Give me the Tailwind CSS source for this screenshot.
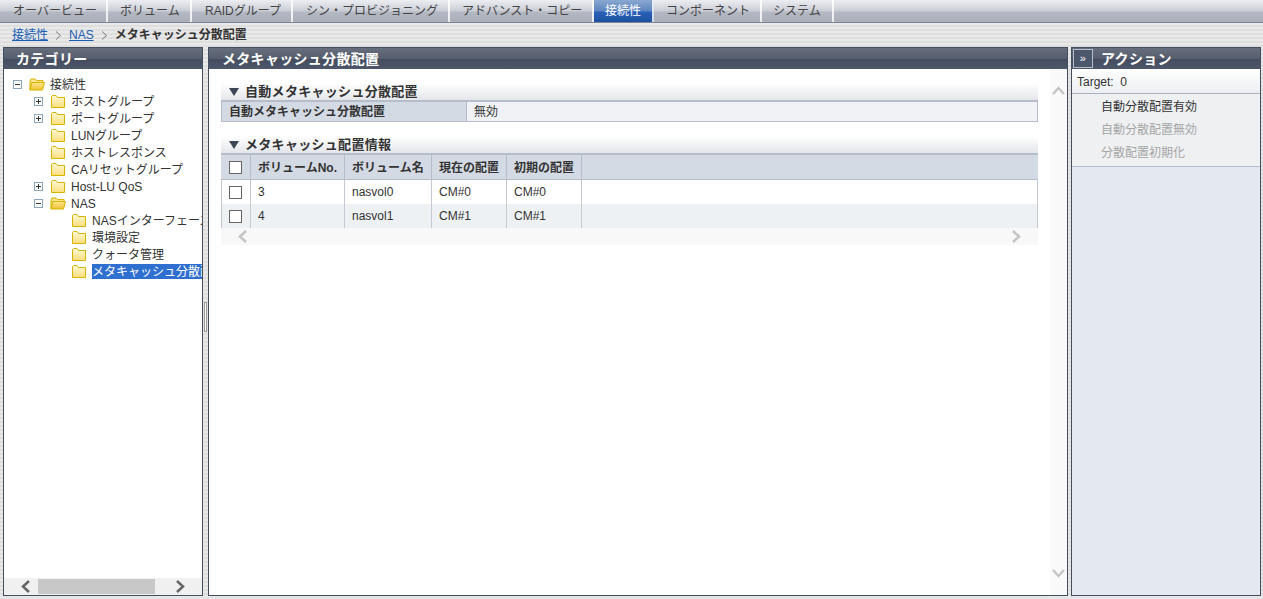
<!DOCTYPE html>
<html lang="ja">
<head>
    <meta charset="UTF-8">
    <title>メタキャッシュ分散配置</title>
    <script src="https://cdn.jsdelivr.net/npm/@tailwindcss/browser@4"></script>
</head>
<body class="h-screen w-[1263px] overflow-hidden flex flex-col bg-[#e6e6e6] text-[12px] leading-none text-[#333] font-['Liberation_Sans','Noto_Sans_CJK_JP',sans-serif]">

    <!-- shared folder fills -->
    <svg class="absolute w-0 h-0">
        <defs>
            <linearGradient id="folderClosed" x1="0" y1="0" x2="0" y2="1"><stop offset="0" stop-color="#fff8d6"/><stop offset="1" stop-color="#fbdf7c"/></linearGradient>
            <linearGradient id="folderOpen" x1="0" y1="0" x2="0" y2="1"><stop offset="0" stop-color="#fbe58c"/><stop offset="1" stop-color="#eec234"/></linearGradient>
        </defs>
    </svg>

    <!-- Tabs -->
    <nav class="h-[23px] shrink-0 flex border-b border-[#7b8494] bg-[linear-gradient(180deg,#eceef2_0%,#c9ccd4_50%,#b4b8c2_55%,#a9aeb9_100%)]">
        <a class="w-[108px] pl-[13px] pt-[5px] border-r-2 border-white/80 text-[#444]">オーバービュー</a>
        <a class="w-[84px] pl-[12px] pt-[5px] border-r-2 border-white/80 text-[#444]">ボリューム</a>
        <a class="w-[101px] pl-[13px] pt-[5px] border-r-2 border-white/80 text-[#444]">RAIDグループ</a>
        <a class="w-[157px] pl-[13px] pt-[5px] border-r-2 border-white/80 text-[#444]">シン・プロビジョニング</a>
        <a class="w-[144px] pl-[12px] pt-[5px] border-r-2 border-white/80 text-[#444]">アドバンスト・コピー</a>
        <a class="w-[60px] pl-[11px] pt-[5px] border-r-2 border-white/80 text-white bg-[linear-gradient(180deg,#8aa8d0_0%,#5d86c0_50%,#2a62b8_54%,#1d50a0_100%)]">接続性</a>
        <a class="w-[108px] pl-[12px] pt-[5px] border-r-2 border-white/80 text-[#444]">コンポーネント</a>
        <a class="w-[72px] pl-[11px] pt-[5px] border-r-2 border-white/80 text-[#444]">システム</a>
    </nav>

    <!-- Breadcrumb -->
    <div class="h-[24px] shrink-0 flex items-center pl-[12px] bg-[repeating-linear-gradient(180deg,#e9e9e9_0px,#e9e9e9_2px,#dedede_2px,#dedede_4px)]">
        <a class="text-[#1a5fb4] underline">接続性</a>
        <svg class="mx-[7px] w-[7px] h-[9px]" viewBox="0 0 7 9" fill="none" stroke="#777" stroke-width="1"><path d="M1 0.5 L5.5 4.5 L1 8.5"/></svg>
        <a class="text-[#1a5fb4] underline">NAS</a>
        <svg class="mx-[7px] w-[7px] h-[9px]" viewBox="0 0 7 9" fill="none" stroke="#777" stroke-width="1"><path d="M1 0.5 L5.5 4.5 L1 8.5"/></svg>
        <span class="font-bold">メタキャッシュ分散配置</span>
    </div>

    <main class="h-[549px] flex pl-[3px] bg-[repeating-linear-gradient(180deg,#e9e9e9_0px,#e9e9e9_2px,#dedede_2px,#dedede_4px)]">
        <!-- Category panel -->
        <section class="w-[200px] flex flex-col border border-[#454e5f] bg-white">
            <h2 class="h-[21px] shrink-0 pl-[12px] pt-[4px] text-[14px] tracking-[0.3px] font-bold text-white bg-[linear-gradient(180deg,#666d7d_0%,#565e6e_50%,#454e60_54%,#4d566a_100%)]">カテゴリー</h2>
            <div class="flex-1 pt-[7px] overflow-hidden">
                <!-- Tree -->
                <div class="h-[17px] flex items-center pl-[9px] whitespace-nowrap">
                    <svg class="w-[9px] h-[9px] mr-[7px]" viewBox="0 0 9 9"><rect x="0.5" y="0.5" width="8" height="8" fill="#fff" stroke="#8aa6c0"/><path d="M2 4.5h5" stroke="#333"/></svg>
                    <svg class="w-[16px] h-[13px] mr-[5px]" viewBox="0 0 16 13"><path d="M1 3 L2 1 H6 L7.5 2.5 H14 V4.5 H3 L1 11 Z" fill="#fbe58c" stroke="#d6b400"/><path d="M3 4.5 H15.5 L13.5 12 H0.8 Z" fill="url(#folderOpen)" stroke="#d6b400"/></svg>
                    <span>接続性</span>
                </div>
                <div class="h-[17px] flex items-center pl-[30px] whitespace-nowrap">
                    <svg class="w-[9px] h-[9px] mr-[8px]" viewBox="0 0 9 9"><rect x="0.5" y="0.5" width="8" height="8" fill="#fff" stroke="#8aa6c0"/><path d="M2 4.5h5M4.5 2v5" stroke="#333"/></svg>
                    <svg class="w-[14px] h-[13px] mr-[6px]" viewBox="0 0 14 13"><path d="M0.5 12.5 V1.5 L1.5 0.5 H5 L6.5 2.5 H13.5 V12.5 Z" fill="url(#folderClosed)" stroke="#d6b400"/></svg>
                    <span>ホストグループ</span>
                </div>
                <div class="h-[17px] flex items-center pl-[30px] whitespace-nowrap">
                    <svg class="w-[9px] h-[9px] mr-[8px]" viewBox="0 0 9 9"><rect x="0.5" y="0.5" width="8" height="8" fill="#fff" stroke="#8aa6c0"/><path d="M2 4.5h5M4.5 2v5" stroke="#333"/></svg>
                    <svg class="w-[14px] h-[13px] mr-[6px]" viewBox="0 0 14 13"><path d="M0.5 12.5 V1.5 L1.5 0.5 H5 L6.5 2.5 H13.5 V12.5 Z" fill="url(#folderClosed)" stroke="#d6b400"/></svg>
                    <span>ポートグループ</span>
                </div>
                <div class="h-[17px] flex items-center pl-[47px] whitespace-nowrap">
                    <svg class="w-[14px] h-[13px] mr-[6px]" viewBox="0 0 14 13"><path d="M0.5 12.5 V1.5 L1.5 0.5 H5 L6.5 2.5 H13.5 V12.5 Z" fill="url(#folderClosed)" stroke="#d6b400"/></svg>
                    <span>LUNグループ</span>
                </div>
                <div class="h-[17px] flex items-center pl-[47px] whitespace-nowrap">
                    <svg class="w-[14px] h-[13px] mr-[6px]" viewBox="0 0 14 13"><path d="M0.5 12.5 V1.5 L1.5 0.5 H5 L6.5 2.5 H13.5 V12.5 Z" fill="url(#folderClosed)" stroke="#d6b400"/></svg>
                    <span>ホストレスポンス</span>
                </div>
                <div class="h-[17px] flex items-center pl-[47px] whitespace-nowrap">
                    <svg class="w-[14px] h-[13px] mr-[6px]" viewBox="0 0 14 13"><path d="M0.5 12.5 V1.5 L1.5 0.5 H5 L6.5 2.5 H13.5 V12.5 Z" fill="url(#folderClosed)" stroke="#d6b400"/></svg>
                    <span>CAリセットグループ</span>
                </div>
                <div class="h-[17px] flex items-center pl-[30px] whitespace-nowrap">
                    <svg class="w-[9px] h-[9px] mr-[8px]" viewBox="0 0 9 9"><rect x="0.5" y="0.5" width="8" height="8" fill="#fff" stroke="#8aa6c0"/><path d="M2 4.5h5M4.5 2v5" stroke="#333"/></svg>
                    <svg class="w-[14px] h-[13px] mr-[6px]" viewBox="0 0 14 13"><path d="M0.5 12.5 V1.5 L1.5 0.5 H5 L6.5 2.5 H13.5 V12.5 Z" fill="url(#folderClosed)" stroke="#d6b400"/></svg>
                    <span>Host-LU QoS</span>
                </div>
                <div class="h-[17px] flex items-center pl-[30px] whitespace-nowrap">
                    <svg class="w-[9px] h-[9px] mr-[7px]" viewBox="0 0 9 9"><rect x="0.5" y="0.5" width="8" height="8" fill="#fff" stroke="#8aa6c0"/><path d="M2 4.5h5" stroke="#333"/></svg>
                    <svg class="w-[16px] h-[13px] mr-[5px]" viewBox="0 0 16 13"><path d="M1 3 L2 1 H6 L7.5 2.5 H14 V4.5 H3 L1 11 Z" fill="#fbe58c" stroke="#d6b400"/><path d="M3 4.5 H15.5 L13.5 12 H0.8 Z" fill="url(#folderOpen)" stroke="#d6b400"/></svg>
                    <span>NAS</span>
                </div>
                <div class="h-[17px] flex items-center pl-[68px] whitespace-nowrap overflow-hidden">
                    <svg class="w-[14px] h-[13px] mr-[6px] shrink-0" viewBox="0 0 14 13"><path d="M0.5 12.5 V1.5 L1.5 0.5 H5 L6.5 2.5 H13.5 V12.5 Z" fill="url(#folderClosed)" stroke="#d6b400"/></svg>
                    <span>NASインターフェース設定</span>
                </div>
                <div class="h-[17px] flex items-center pl-[68px] whitespace-nowrap">
                    <svg class="w-[14px] h-[13px] mr-[6px]" viewBox="0 0 14 13"><path d="M0.5 12.5 V1.5 L1.5 0.5 H5 L6.5 2.5 H13.5 V12.5 Z" fill="url(#folderClosed)" stroke="#d6b400"/></svg>
                    <span>環境設定</span>
                </div>
                <div class="h-[17px] flex items-center pl-[68px] whitespace-nowrap">
                    <svg class="w-[14px] h-[13px] mr-[6px]" viewBox="0 0 14 13"><path d="M0.5 12.5 V1.5 L1.5 0.5 H5 L6.5 2.5 H13.5 V12.5 Z" fill="url(#folderClosed)" stroke="#d6b400"/></svg>
                    <span>クォータ管理</span>
                </div>
                <div class="h-[17px] flex items-center pl-[68px] whitespace-nowrap overflow-hidden">
                    <svg class="w-[14px] h-[13px] mr-[6px] shrink-0" viewBox="0 0 14 13"><path d="M0.5 12.5 V1.5 L1.5 0.5 H5 L6.5 2.5 H13.5 V12.5 Z" fill="url(#folderClosed)" stroke="#d6b400"/></svg>
                    <span class="flex-1 h-[15px] pt-[2px] bg-[#2f6fd0] text-white overflow-hidden">メタキャッシュ分散配置</span>
                </div>
            </div>
            <!-- Horizontal scrollbar -->
            <div class="h-[17px] shrink-0 flex items-center bg-[#f0f0f0]">
                <svg class="ml-[16px] w-[11px] h-[13px]" viewBox="0 0 11 13" fill="none" stroke="#666" stroke-width="2.5"><path d="M9 1 L3 6.5 L9 12"/></svg>
                <div class="ml-[7px] w-[117px] h-[15px] bg-[#c8c8c8]"></div>
                <svg class="ml-[20px] w-[11px] h-[13px]" viewBox="0 0 11 13" fill="none" stroke="#666" stroke-width="2.5"><path d="M2 1 L8 6.5 L2 12"/></svg>
            </div>
        </section>

        <!-- Splitter -->
        <div class="w-[5px] flex items-center justify-center">
            <div class="w-[3px] h-[30px] mb-[10px] bg-white border border-[#999]"></div>
        </div>

        <!-- Main panel -->
        <section class="w-[860px] flex flex-col border border-[#454e5f] bg-white">
            <h2 class="h-[21px] shrink-0 pl-[13px] pt-[4px] text-[14px] tracking-[0.3px] font-bold text-white bg-[linear-gradient(180deg,#666d7d_0%,#565e6e_50%,#454e60_54%,#4d566a_100%)]">メタキャッシュ分散配置</h2>
            <div class="flex-1 flex">
                <div class="w-[841px] pt-[14px] pl-[12px]">
                    <div class="w-[817px] h-[19px] flex items-center border-b-2 border-[#b4bdc9] bg-gradient-to-b from-white to-[#e4e6ea] text-[13px] tracking-[0.3px] font-bold">
                        <svg class="ml-[8px] mr-[6px] w-[10px] h-[8px]" viewBox="0 0 10 8"><path d="M0 0 H10 L5 8 Z" fill="#3d4656"/></svg>自動メタキャッシュ分散配置
                    </div>
                    <div class="w-[817px] h-[20px] flex border border-t-0 border-[#b4bdc9]">
                        <div class="w-[245px] pl-[7px] flex items-center font-bold bg-[#d4dae3] border-r border-[#b4bdc9]">自動メタキャッシュ分散配置</div>
                        <div class="flex-1 pl-[7px] flex items-center bg-[#f0f2f5]">無効</div>
                    </div>

                    <div class="mt-[14px] w-[817px] h-[19px] flex items-center border-b-2 border-[#b4bdc9] bg-gradient-to-b from-white to-[#e4e6ea] text-[13px] tracking-[0.3px] font-bold">
                        <svg class="ml-[8px] mr-[6px] w-[10px] h-[8px]" viewBox="0 0 10 8"><path d="M0 0 H10 L5 8 Z" fill="#3d4656"/></svg>メタキャッシュ配置情報
                    </div>
                    <!-- Volume table -->
                    <div class="w-[817px] h-[25px] flex items-center font-bold bg-[#d4dae3] border-b border-[#b4bdc9]">
                        <div class="w-[30px] h-full pl-[8px] flex items-center border-r border-[#b4bdc9]"><div class="w-[13px] h-[13px] border border-[#666] bg-white"></div></div>
                        <div class="w-[94px] h-full pl-[7px] pt-px flex items-center border-r border-[#b4bdc9]">ボリュームNo.</div>
                        <div class="w-[87px] h-full pl-[7px] pt-px flex items-center border-r border-[#b4bdc9]">ボリューム名</div>
                        <div class="w-[75px] h-full pl-[7px] pt-px flex items-center border-r border-[#b4bdc9]">現在の配置</div>
                        <div class="w-[75px] h-full pl-[7px] pt-px flex items-center border-r border-[#b4bdc9]">初期の配置</div>
                    </div>
                    <div class="w-[817px] h-[24px] flex items-center">
                        <div class="w-[30px] h-full pl-[7px] flex items-center border-x border-[#c3cad4]"><div class="w-[13px] h-[13px] border border-[#666] bg-white"></div></div>
                        <div class="w-[94px] h-full pl-[7px] flex items-center border-r border-[#c3cad4]">3</div>
                        <div class="w-[87px] h-full pl-[7px] flex items-center border-r border-[#c3cad4]">nasvol0</div>
                        <div class="w-[75px] h-full pl-[7px] flex items-center border-r border-[#c3cad4]">CM#0</div>
                        <div class="w-[75px] h-full pl-[7px] flex items-center border-r border-[#c3cad4]">CM#0</div>
                        <div class="flex-1 h-full border-r border-[#c3cad4]"></div>
                    </div>
                    <div class="w-[817px] h-[24px] flex items-center bg-[#eef1f4]">
                        <div class="w-[30px] h-full pl-[7px] flex items-center border-x border-[#c3cad4]"><div class="w-[13px] h-[13px] border border-[#666] bg-white"></div></div>
                        <div class="w-[94px] h-full pl-[7px] flex items-center border-r border-[#c3cad4]">4</div>
                        <div class="w-[87px] h-full pl-[7px] flex items-center border-r border-[#c3cad4]">nasvol1</div>
                        <div class="w-[75px] h-full pl-[7px] flex items-center border-r border-[#c3cad4]">CM#1</div>
                        <div class="w-[75px] h-full pl-[7px] flex items-center border-r border-[#c3cad4]">CM#1</div>
                        <div class="flex-1 h-full border-r border-[#c3cad4]"></div>
                    </div>
                    <div class="w-[817px] h-[17px] flex items-center justify-between px-[16px] bg-[#f8f8f8]">
                        <svg class="w-[11px] h-[13px]" viewBox="0 0 11 13" fill="none" stroke="#c4c4c4" stroke-width="2.5"><path d="M9 1 L3 6.5 L9 12"/></svg>
                        <svg class="w-[11px] h-[13px]" viewBox="0 0 11 13" fill="none" stroke="#c4c4c4" stroke-width="2.5"><path d="M2 1 L8 6.5 L2 12"/></svg>
                    </div>
                </div>
                <!-- Vertical scrollbar -->
                <div class="w-[17px] flex flex-col items-center justify-between pt-[16px] pb-[16px] bg-[#f9f9f9]">
                    <svg class="w-[13px] h-[11px]" viewBox="0 0 13 11" fill="none" stroke="#c4c4c4" stroke-width="2.5"><path d="M1 9 L6.5 3 L12 9"/></svg>
                    <svg class="w-[13px] h-[11px]" viewBox="0 0 13 11" fill="none" stroke="#c4c4c4" stroke-width="2.5"><path d="M1 2 L6.5 8 L12 2"/></svg>
                </div>
            </div>
        </section>

        <div class="w-[3px]"></div>

        <!-- Action panel -->
        <section class="w-[190px] flex flex-col border border-[#454e5f] bg-[#e4e8f1]">
            <h2 class="h-[21px] shrink-0 flex items-center text-[14px] tracking-[0.3px] font-bold text-white bg-[linear-gradient(180deg,#666d7d_0%,#565e6e_50%,#454e60_54%,#4d566a_100%)]">
                <span class="ml-px w-[20px] h-[19px] flex items-center justify-center text-[11px] font-normal border border-[#b5bccb] bg-[#4d576b]">»</span>
                <span class="ml-[8px]">アクション</span>
            </h2>
            <div class="h-[25px] shrink-0 pl-[5px] pt-[7px] bg-gradient-to-b from-white to-[#eceef1] border-b border-[#a9b2bf]">Target:&nbsp; 0</div>
            <div class="h-[73px] pt-px pl-[29px] bg-[#eef0f2] border-b border-[#b4bdc9]">
                <div class="h-[23px] flex items-center">自動分散配置有効</div>
                <div class="h-[23px] flex items-center text-[#a6a6a6]">自動分散配置無効</div>
                <div class="h-[23px] flex items-center text-[#a6a6a6]">分散配置初期化</div>
            </div>
        </section>
    </main>
</body>
</html>
